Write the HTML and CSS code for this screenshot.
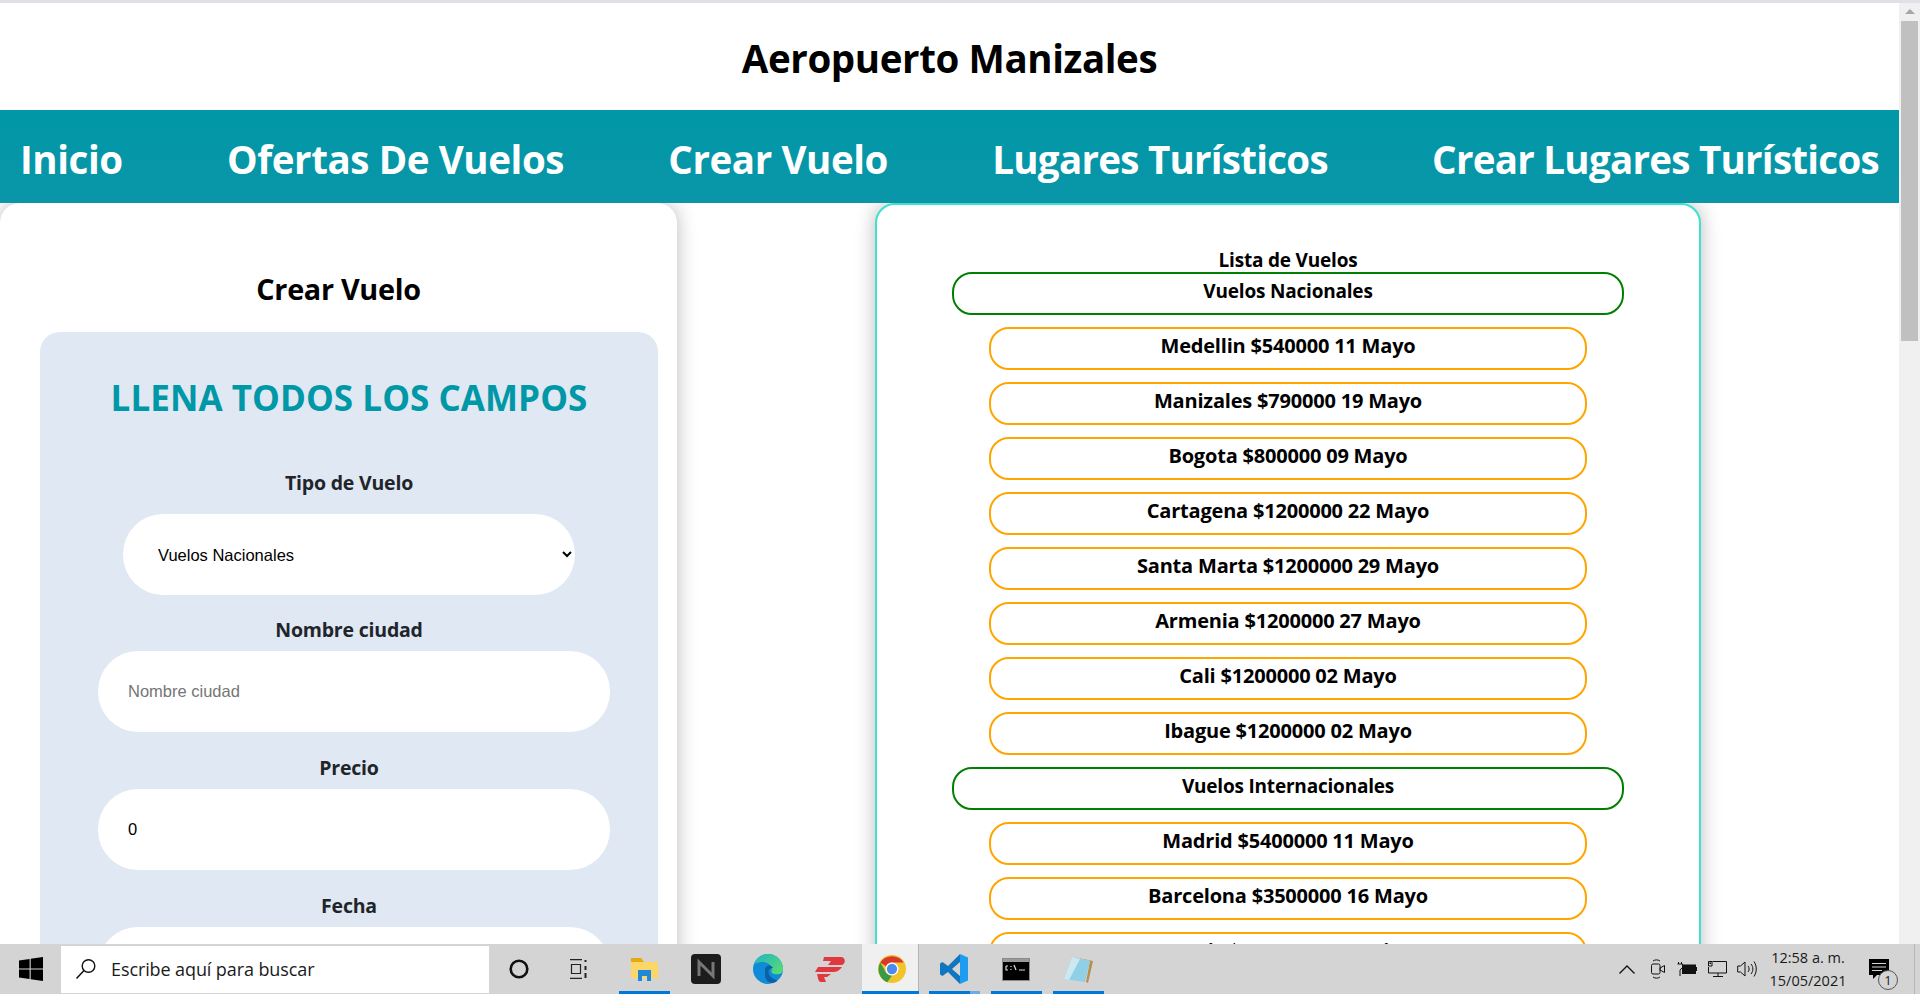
FILE: index.html
```html
<!DOCTYPE html>
<html lang="es">
<head>
    <meta charset="UTF-8">
    <meta name="viewport" content="width=device-width, initial-scale=1.0">
    <title>Aeropuerto Manizales</title>
    <link rel="stylesheet" href="styles.css">
</head>
<body>
    <div class="ventana">
        <div class="pagina">
            <!-- Encabezado -->
            <header class="encabezado">
                <h1>Aeropuerto Manizales</h1>
            </header>

            <!-- Menu -->
            <nav class="menu">
                <a href="#">Inicio</a>
                <a href="#">Ofertas De Vuelos</a>
                <a href="#">Crear Vuelo</a>
                <a class="largo" href="#">Lugares Turísticos</a>
                <a class="largo" href="#">Crear Lugares Turísticos</a>
            </nav>

            <main class="contenido">
                <!-- Formulario -->
                <section class="tarjeta-form">
                    <h2>Crear Vuelo</h2>
                    <form class="panel">
                        <h3>LLENA TODOS LOS CAMPOS</h3>
                        <div class="campo campo-tipo">
                            <label for="tipo">Tipo de Vuelo</label>
                            <select id="tipo">
                                <option>Vuelos Nacionales</option>
                                <option>Vuelos Internacionales</option>
                            </select>
                        </div>
                        <div class="campo">
                            <label for="ciudad">Nombre ciudad</label>
                            <input type="text" id="ciudad" placeholder="Nombre ciudad">
                        </div>
                        <div class="campo">
                            <label for="precio">Precio</label>
                            <input type="number" id="precio" value="0">
                        </div>
                        <div class="campo">
                            <label for="fecha">Fecha</label>
                            <input type="text" id="fecha">
                        </div>
                    </form>
                </section>

                <!-- Lista de vuelos -->
                <section class="tarjeta-lista">
                    <h4>Lista de Vuelos</h4>
                    <div class="tipo-vuelo">Vuelos Nacionales</div>
                    <div class="vuelo">Medellin $540000 11 Mayo</div>
                    <div class="vuelo">Manizales $790000 19 Mayo</div>
                    <div class="vuelo">Bogota $800000 09 Mayo</div>
                    <div class="vuelo">Cartagena $1200000 22 Mayo</div>
                    <div class="vuelo">Santa Marta $1200000 29 Mayo</div>
                    <div class="vuelo">Armenia $1200000 27 Mayo</div>
                    <div class="vuelo">Cali $1200000 02 Mayo</div>
                    <div class="vuelo">Ibague $1200000 02 Mayo</div>
                    <div class="tipo-vuelo">Vuelos Internacionales</div>
                    <div class="vuelo">Madrid $5400000 11 Mayo</div>
                    <div class="vuelo">Barcelona $3500000 16 Mayo</div>
                    <div class="vuelo">Paris $7000000 24 Junio</div>
                </section>
            </main>
        </div>

        <!-- Barra de desplazamiento -->
        <div class="scroll">
            <div class="scroll-flecha"></div>
            <div class="scroll-barra"></div>
        </div>
    </div>

    <!-- Barra de tareas -->
    <footer class="tareas">
        <svg class="ico-win" width="24" height="24" viewBox="0 0 24 24"><path fill="#000" d="M0 3.4 10.6 1.9V11.4H0ZM11.7 1.7 24 0V11.4H11.7ZM0 12.6H10.6V22.1L0 20.6ZM11.7 12.6H24V24L11.7 22.3Z"/></svg>
        <div class="buscar">
            <svg width="22" height="22" viewBox="0 0 22 22"><circle cx="13.5" cy="8" r="6.3" fill="none" stroke="#111" stroke-width="1.4"/><path d="M9 12.6 1.5 20.500" stroke="#111" stroke-width="1.5"/></svg>
            <span>Escribe aquí para buscar</span>
        </div>
        <div class="apps">
            <div class="app"><svg width="22" height="22" viewBox="0 0 22 22"><circle cx="11" cy="11" r="8.3" fill="none" stroke="#111" stroke-width="2.6"/></svg></div>
            <div class="app app-vista"><svg width="17" height="20" viewBox="0 0 17 20"><path d="M0 .6H12M0 19.400H12M1.500 5.500H10.500V14.500H1.500Z" fill="none" stroke="#222" stroke-width="1.200"/><path d="M15.500 1V3M15.500 7V11M15.500 14V19" stroke="#222" stroke-width="2"/></svg></div>
            <div class="app activa"><svg width="27" height="23" viewBox="0 0 27 23"><path fill="#e9a80f" d="M0 0H10L13 4H0Z"/><path fill="#fcd768" d="M0 4H27V20H0Z"/><path fill="#1c8ad6" d="M7 12H20V23H16V18H11V23H7Z"/></svg></div>
            <div class="app"><svg width="30" height="30" viewBox="0 0 30 30"><rect width="30" height="30" rx="4" fill="#1c1c1c"/><path d="M8 22V8L22 22V8" fill="none" stroke="#777" stroke-width="3"/></svg></div>
            <div class="app"><svg width="30" height="30" viewBox="0 0 30 30"><defs><linearGradient id="edge" x1="0" y1="0" x2="1" y2="1"><stop offset="0" stop-color="#1fb5c4"/><stop offset="1" stop-color="#5fdf6a"/></linearGradient></defs><circle cx="15" cy="15" r="15" fill="#0f8bd8"/><path fill="url(#edge)" d="M1 10C4 3 10 0 15 0 24 0 30 7 30 15 30 20 25 21 21 20 18 19 18 17 19 15 18 10 14 8 9 8 6 8 3 9 1 10Z"/><path fill="#0d5fa6" d="M12 16C12 11 18 10 20 14 15 14 14 19 18 23 21 26 25 26 24 27 19 31 13 28 12 22Z"/></svg></div>
            <div class="app"><svg width="30" height="25" viewBox="0 0 30 25"><path fill="#e0383e" d="M9 0H26C31 0 31 8 26 8H13L16 4H8ZM3 10H27C25 13 22 15 18 15H0ZM2 17H16L12 20H9L11 25H6C3 25 3 20 2 17Z"/></svg></div>
            <div class="app activa actual"><svg width="28" height="28" viewBox="0 0 30 30"><circle cx="15" cy="15" r="15" fill="#f2c42c"/><path fill="#d8392b" d="M2.500 8A15 15 0 0 1 27.500 8H15A7 7 0 0 0 8.500 12Z"/><path fill="#3a9a47" d="M2.500 8 9 19.500A7 7 0 0 0 15 22L10 29.200A15 15 0 0 1 2.500 8Z"/><circle cx="15" cy="15" r="7" fill="#fff"/><circle cx="15" cy="15" r="5.500" fill="#4b8bf0"/></svg></div>
            <div class="app activa parcial"><svg width="30" height="30" viewBox="0 0 30 30"><path fill="#0f76bf" fill-rule="evenodd" d="M21 0 9 12 3.500 8 1 9.500V20.500L3.500 22 9 18 21 30ZM21 8 13 15 21 22Z"/><path fill="#1e9df0" d="M21 0 29 3.500V26.500L21 30Z"/></svg></div>
            <div class="app activa"><svg width="28" height="23" viewBox="0 0 28 23"><rect x=".5" y=".5" width="27" height="22" fill="#000" stroke="#8a8a8a"/><rect x="1" y="1" width="26" height="3" fill="#9a9a9a"/><path d="M4 8H6M4 8V12H6M9 8V9M9 11V12M12 7 14 12M17 12H23" stroke="#ddd" stroke-width="1.200" fill="none"/></svg></div>
            <div class="app activa"><svg width="29" height="27" viewBox="0 0 29 27"><path fill="#b78f4d" d="M9 1 29 5 24 27 22 26 26 5Z"/><path fill="#8fd0e6" d="M8 1 26 5 21 26 0 23Z"/><path fill="#cbe9f3" d="M8 1 16 3 5 24 0 23Z"/></svg></div>
        </div>
        <div class="bandeja">
            <svg class="band-flecha" width="16" height="9" viewBox="0 0 16 9"><path d="M.5 8.500 8 1 15.500 8.500" fill="none" stroke="#111" stroke-width="1.300"/></svg>
            <svg class="band-video" width="14" height="22" viewBox="0 0 14 22"><rect x=".5" y="6" width="8.500" height="10" rx="1.500" fill="none" stroke="#111"/><path d="M9 10 13.500 7.500V14.500L9 12ZM2 3C4 1.500 7 1.500 9 3M2 19C4 20.500 7 20.500 9 19" fill="none" stroke="#111"/></svg>
            <svg width="20" height="16" viewBox="0 0 20 16"><rect x="5.500" y="4" width="13" height="8.500" fill="#111" stroke="#111"/><path d="M1.500 1V3M4.500 1V3M.5 3H5.500V6.500L3 9V15" fill="none" stroke="#111"/><path d="M19.500 6V10" stroke="#111" stroke-width="1.500"/></svg>
            <svg width="20" height="18" viewBox="0 0 20 18"><path d="M5.500 1.500H19.500V13H1.500V7M1.500 1.500H5V6H1.500ZM11 13V16.500M6 16.500H16" fill="none" stroke="#111"/><rect x="2.500" y="2.500" width="1.500" height="1.500" fill="#111"/></svg>
            <svg width="20" height="18" viewBox="0 0 20 18"><path d="M.7 6H3.500L8 2V16L3.500 12H.7ZM11 6C12.500 8 12.500 10 11 12M14 4C16.500 7 16.500 11 14 14M17 1.500C20 6 20 12 17 16.500" fill="none" stroke="#111"/></svg>
        </div>
        <div class="reloj">
            <span>12:58 a. m.</span>
            <span>15/05/2021</span>
        </div>
        <div class="aviso">
            <svg width="21" height="21" viewBox="0 0 21 21"><path fill="#000" d="M0 0H20V16H8L4 20V16H0Z"/><path d="M3 4.500H17M3 8H17M3 11.500H13" stroke="#d4d4d4"/></svg>
            <span class="aviso-num">1</span>
        </div>
        <div class="escritorio"></div>
    </footer>
</body>
</html>
```

FILE: styles.css
```css
* {
    box-sizing: border-box;
}
html, body {
    height: 100%;
}
body {
    margin: 0;
    display: flex;
    flex-direction: column;
    overflow: hidden;
    background: white;
    font-family: "Open Sans", Arial, sans-serif;
    color: black;
}
.ventana {
    flex: 1;
    min-height: 0;
    display: flex;
    overflow: hidden;
    border-top: 3px solid #e0e0e6;
}
.pagina {
    flex: 1;
    min-width: 0;
    overflow: hidden;
}
.encabezado {
    height: 107px;
    display: flex;
    align-items: center;
    justify-content: center;
}
h1 {
    margin: 0 0 -3px;
    font-size: 38.5px;
    font-weight: 700;
    letter-spacing: -0.4px;
}
.menu {
    position: relative;
    z-index: 2;
    height: 93px;
    padding: 4px 20px 0 20px;
    display: flex;
    align-items: center;
    justify-content: space-between;
    background: linear-gradient(#0097a7, #0a96a8);
}
.menu a {
    color: white;
    text-decoration: none;
    font-size: 38.5px;
    font-weight: 700;
    letter-spacing: -0.4px;
    white-space: nowrap;
}
.menu a.largo {
    letter-spacing: -0.72px;
}
.contenido {
    display: flex;
    align-items: flex-start;
    gap: 198px;
}
.tarjeta-form {
    flex: none;
    width: 677px;
    height: 900px;
    padding: 68px 19px 0 40px;
    background: white;
    border-radius: 20px;
    box-shadow: 0 0 20px rgba(0, 0, 0, 0.28);
}
h2 {
    margin: 0 0 25px -21px;
    line-height: 36px;
    text-align: center;
    font-size: 28.8px;
    font-weight: 700;
    letter-spacing: -0.3px;
}
.panel {
    height: 800px;
    padding-top: 40px;
    background: #dfe8f3;
    border-radius: 20px;
}
h3 {
    margin: 0 0 46px;
    line-height: 52px;
    text-align: center;
    color: #0097a7;
    font-size: 35px;
    font-weight: 700;
    letter-spacing: 0.05px;
}
.campo {
    margin-bottom: 23px;
    text-align: center;
}
.campo-tipo {
    margin-bottom: 22px;
}
label {
    display: block;
    margin-bottom: 8px;
    line-height: 26px;
    color: #212529;
    font-size: 19.5px;
    font-weight: 700;
    letter-spacing: -0.2px;
}
.campo-tipo label {
    margin-bottom: 18px;
}
input, select {
    display: block;
    height: 81px;
    border: none;
    background: white;
    font-family: "Liberation Sans", Arial, sans-serif;
    font-size: 16.5px;
    color: black;
    outline: none;
}
input {
    width: 512px;
    margin: 0 0 0 58px;
    padding: 0 30px;
    border-radius: 40px;
    appearance: textfield;
}
input::placeholder {
    color: #757575;
}
select {
    width: 452px;
    margin: 0 auto;
    padding: 0 31px;
    border-radius: 40px;
}
.tarjeta-lista {
    flex: none;
    width: 826px;
    height: 900px;
    padding: 43px 75px 0;
    background: white;
    border: 2px solid #40e0d0;
    border-radius: 20px;
    box-shadow: 0 0 20px rgba(0, 0, 0, 0.28);
    font-weight: 700;
    letter-spacing: -0.2px;
    text-align: center;
}
h4 {
    margin: 0;
    line-height: 24px;
    font-size: 19px;
    font-weight: 700;
}
.tipo-vuelo, .vuelo {
    height: 43px;
    margin-bottom: 12px;
    padding-top: 5px;
    line-height: 24px;
    border-radius: 20px;
}
.tipo-vuelo {
    border: 2px solid green;
    font-size: 19px;
}
.vuelo {
    margin-left: 37px;
    margin-right: 37px;
    border: 2px solid orange;
    font-size: 20px;
}
.scroll {
    flex: none;
    width: 21px;
    padding-left: 2px;
    padding-right: 2px;
    background: #f0f0f0;
}
.scroll-flecha {
    width: 0;
    margin: 6px auto 7px;
    border-left: 5px solid transparent;
    border-right: 5px solid transparent;
    border-bottom: 5px solid #a6a6a6;
}
.scroll-barra {
    height: 320px;
    background: #c0c0c0;
}

/* Barra de tareas */
.tareas {
    flex: none;
    height: 50px;
    display: flex;
    align-items: center;
    background: #d4d4d4;
    color: #1a1a1a;
}
.ico-win {
    margin: 0 18px 0 19px;
}
.buscar {
    width: 428px;
    height: 47px;
    display: flex;
    align-items: center;
    gap: 14px;
    padding-left: 14px;
    background: white;
    font-size: 18px;
    letter-spacing: -0.1px;
}
.apps {
    display: flex;
    height: 50px;
}
.app {
    position: relative;
    flex: none;
    width: 62px;
    padding-right: 2px;
    display: flex;
    align-items: center;
    justify-content: center;
}
.app-vista {
    width: 63px;
    padding-right: 9px;
}
.activa::after {
    content: "";
    position: absolute;
    left: 5px;
    right: 6px;
    bottom: 0;
    height: 3px;
    background: #0078d7;
}
.actual {
    background: linear-gradient(to right, #f0f0f0 56px, #b5b5b5 56px, #b5b5b5 57px, transparent 57px);
}
.actual::after {
    left: 0;
    right: 5px;
    background: linear-gradient(to right, #0078d7 57px, #5aa5e3 57px);
}
.parcial::after {
    background: linear-gradient(to right, #0078d7 41px, #6aade6 41px);
}
.bandeja {
    margin-left: auto;
    display: flex;
    align-items: center;
    gap: 10px;
}
.band-flecha {
    margin-right: 6px;
}
.band-video {
    margin-right: 2px;
}
.reloj {
    width: 90px;
    margin-left: 6px;
    display: flex;
    flex-direction: column;
    align-items: center;
    gap: 5px;
    font-size: 14.5px;
    line-height: 18px;
}
.aviso {
    position: relative;
    width: 45px;
    height: 26px;
    margin-left: 16px;
    padding-top: 3px;
}
.aviso svg {
    display: block;
}
.aviso-num {
    position: absolute;
    left: 9px;
    top: 14px;
    width: 20px;
    height: 20px;
    border: 1px solid #555;
    border-radius: 50%;
    background: #d4d4d4;
    text-align: center;
    font-size: 13px;
    line-height: 18px;
}
.escritorio {
    align-self: stretch;
    width: 6px;
    border-left: 1px solid #b5b5b5;
}
```
